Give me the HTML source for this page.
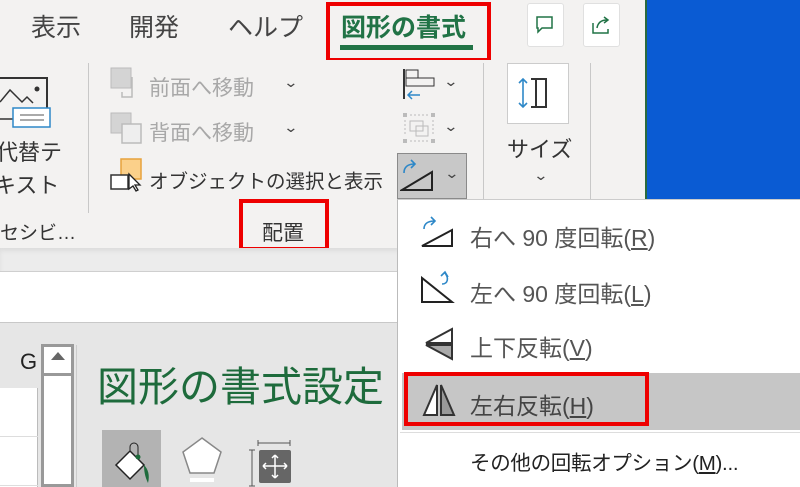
<!DOCTYPE html>
<html><head><meta charset="utf-8"><style>
*{margin:0;padding:0;box-sizing:border-box}
body{width:800px;height:487px;overflow:hidden;position:relative;background:#f3f2f1;font-family:"Liberation Sans","Noto Sans CJK JP",sans-serif;color:#333}
.a{position:absolute;white-space:nowrap}
.tab{font-size:25px;top:8px;color:#444}
.dis{color:#a8a8a8}
.mi{font-size:23px;color:#555;left:470px}
.ch{font-size:14px;color:#444;transform:scaleX(1.3)}
u{text-decoration:underline}
</style></head><body>
<div class="a" style="left:647px;top:0;width:153px;height:200px;background:#0a5bd3"></div>
<div class="a" style="left:645px;top:0;width:2px;height:200px;background:#2a6b3e"></div>
<div class="a tab" style="left:31px">表示</div>
<div class="a tab" style="left:129px">開発</div>
<div class="a tab" style="left:228px">ヘルプ</div>
<div class="a tab" style="left:341px;color:#217346;font-weight:bold">図形の書式</div>
<div class="a" style="left:340px;top:45px;width:133px;height:5px;background:#217346"></div>
<div class="a" style="left:326px;top:2px;width:165px;height:60px;border:4px solid #e00"></div>
<div class="a" style="left:527px;top:3px;width:37px;height:44px;background:#fff;border:1px solid #e0e0e0;border-radius:3px"></div>
<svg class="a" style="left:535px;top:15px" width="20" height="20"><path d="M2 2h15v11h-10l-4 4v-4h-1z" fill="none" stroke="#217346" stroke-width="1.5"/></svg>
<div class="a" style="left:583px;top:3px;width:37px;height:44px;background:#fff;border:1px solid #e0e0e0;border-radius:3px"></div>
<svg class="a" style="left:590px;top:13px" width="24" height="24"><path d="M3 10v10h15v-4M7 15c1-6 5-8 10-8M14 4l4 3-4 3" fill="none" stroke="#217346" stroke-width="1.5"/></svg>
<div class="a" style="left:0;top:60px;width:645px;height:188px;background:#f3f2f1"></div>
<div class="a" style="left:88px;top:63px;width:1px;height:150px;background:#c8c8c8"></div>
<div class="a" style="left:483px;top:63px;width:1px;height:170px;background:#c8c8c8"></div>
<div class="a" style="left:590px;top:63px;width:1px;height:170px;background:#c8c8c8"></div>
<svg class="a" style="left:0;top:75px" width="55" height="55"><path d="M0 3h47v31" fill="none" stroke="#333" stroke-width="2"/><path d="M0 27l10-12 12 12 5-5 6 6" fill="none" stroke="#333" stroke-width="1.5"/><circle cx="37" cy="14" r="2.5" fill="#333"/><path d="M0 44h13" stroke="#333" stroke-width="1.5"/><rect x="13" y="33" width="37" height="19" fill="#fff" stroke="#2e88c8" stroke-width="1.5"/><path d="M20 40h24M20 45h24" stroke="#555"/></svg>
<div class="a" style="left:-4px;top:135px;font-size:22px">代替テ</div>
<div class="a" style="left:-6px;top:168px;font-size:22px">キスト</div>
<div class="a" style="left:0;top:218px;font-size:19px">セシビ…</div>
<svg class="a" style="left:110px;top:67px" width="36" height="34"><rect x="1" y="1" width="20" height="20" fill="#d4d4d4" stroke="#bbb"/><path d="M22 10v20h-10v-5" fill="none" stroke="#bbb" stroke-width="1.5"/></svg>
<div class="a dis" style="left:149px;top:72px;font-size:21px">前面へ移動</div>
<div class="a ch dis" style="left:285px;top:74px">⌄</div>
<svg class="a" style="left:110px;top:112px" width="36" height="34"><rect x="1" y="1" width="20" height="20" fill="#d4d4d4" stroke="#bbb"/><rect x="12" y="12" width="19" height="19" fill="#eee" stroke="#bbb" stroke-width="1.5"/></svg>
<div class="a dis" style="left:149px;top:117px;font-size:21px">背面へ移動</div>
<div class="a ch dis" style="left:285px;top:119px">⌄</div>
<svg class="a" style="left:110px;top:158px" width="36" height="36"><rect x="11" y="1" width="20" height="20" fill="#fbd08a" stroke="#e8a23c" stroke-width="1.5"/><rect x="1" y="17" width="17" height="14" fill="#fff" stroke="#333" stroke-width="1.5"/><path d="M19 16l11 11h-5l3 5-2 1-3-5-4 3z" fill="#fff" stroke="#222" stroke-width="1.3"/></svg>
<div class="a" style="left:149px;top:165px;font-size:19.5px;color:#333">オブジェクトの選択と表示</div>
<div class="a" style="left:262px;top:217px;font-size:21px">配置</div>
<div class="a" style="left:239px;top:199px;width:90px;height:52px;border:4px solid #e00"></div>
<svg class="a" style="left:402px;top:68px" width="36" height="34"><path d="M2 1v30" stroke="#333" stroke-width="2"/><rect x="4" y="2" width="12" height="8" fill="none" stroke="#333"/><rect x="4" y="10" width="28" height="8" fill="none" stroke="#333"/><path d="M18 27h-12M10 23l-4 4 4 4" fill="none" stroke="#2e88c8" stroke-width="1.5"/></svg>
<div class="a ch" style="left:445px;top:73px">⌄</div>
<svg class="a" style="left:402px;top:112px" width="36" height="34"><g fill="#bbb"><rect x="1" y="1" width="4" height="4"/><rect x="29" y="1" width="4" height="4"/><rect x="1" y="27" width="4" height="4"/><rect x="29" y="27" width="4" height="4"/></g><path d="M3 8v16M31 8v16M8 3h18M8 29h18" stroke="#bbb" stroke-dasharray="2 2"/><rect x="8" y="9" width="13" height="10" fill="none" stroke="#bbb"/><rect x="14" y="14" width="12" height="10" fill="none" stroke="#bbb"/></svg>
<div class="a ch dis" style="left:445px;top:118px">⌄</div>
<div class="a" style="left:397px;top:153px;width:70px;height:46px;background:#c8c8c8;border:1px solid #8a8a8a"></div>
<svg class="a" style="left:400px;top:158px" width="36" height="36"><path d="M4 15c0-7 5-9 11-9M11 2l4 4-4 4" fill="none" stroke="#2e88c8" stroke-width="1.6"/><path d="M2 32l30-18v18z" fill="none" stroke="#222" stroke-width="2"/></svg>
<div class="a ch" style="left:446px;top:165px">⌄</div>
<div class="a" style="left:507px;top:63px;width:62px;height:61px;background:#fff;border:1px solid #ccc"></div>
<svg class="a" style="left:517px;top:75px" width="42" height="38"><path d="M6 4v28M2 8l4-4 4 4M2 28l4 4 4-4" fill="none" stroke="#2e88c8" stroke-width="1.6"/><path d="M14 4h4M14 32h4" stroke="#333" stroke-width="2"/><rect x="19" y="4" width="10" height="28" fill="none" stroke="#333" stroke-width="2"/></svg>
<div class="a" style="left:507px;top:132px;font-size:22px">サイズ</div>
<div class="a ch" style="left:535px;top:167px">⌄</div>
<div class="a" style="left:0;top:248px;width:400px;height:23px;background:#ececec;box-shadow:inset 0 3px 4px #ddd"></div>
<div class="a" style="left:0;top:271px;width:400px;height:1px;background:#cfcfcf"></div>
<div class="a" style="left:0;top:272px;width:400px;height:50px;background:#fff"></div>
<div class="a" style="left:0;top:322px;width:400px;height:1px;background:#c8c8c8"></div>
<div class="a" style="left:0;top:323px;width:400px;height:164px;background:#e6e6e6"></div>
<div class="a" style="left:20px;top:349px;font-size:22px;color:#222">G</div>
<div class="a" style="left:0;top:388px;width:38px;height:99px;background:#fff;border-right:1px solid #bbb"></div>
<div class="a" style="left:0;top:436px;width:38px;height:1px;background:#ddd"></div>
<div class="a" style="left:0;top:485px;width:38px;height:1px;background:#ddd"></div>
<div class="a" style="left:41px;top:344px;width:33px;height:143px;background:#fff;border:3px solid #999"></div>
<div class="a" style="left:44px;top:373px;width:27px;height:3px;background:#999"></div>
<div class="a" style="left:51px;top:352px;width:0;height:0;border-left:7px solid transparent;border-right:7px solid transparent;border-bottom:8px solid #666"></div>
<div class="a" style="left:76px;top:345px;width:1px;height:142px;background:#ccc"></div>
<div class="a" style="left:97px;top:353px;font-size:41px;color:#1e6b3c">図形の書式設定</div>
<div class="a" style="left:102px;top:430px;width:59px;height:57px;background:#b3b3b3"></div>
<svg class="a" style="left:112px;top:437px" width="42" height="50"><path d="M4 28l14-14 14 14-14 14z" fill="#fff" stroke="#222" stroke-width="1.5"/><path d="M18 14v-4a4 4 0 0 1 8 0v10" fill="none" stroke="#222"/><circle cx="26" cy="20" r="2.5" fill="#1e6b3c"/><path d="M32 28c4 4 6 10 4 18c-3-6-4-12-4-18z" fill="#1e6b3c"/></svg>
<svg class="a" style="left:180px;top:436px" width="44" height="51"><path d="M22 2l19 14-7 21h-24l-7-21z" fill="#fff" stroke="#888" stroke-width="1.5"/><path d="M10 44h24" stroke="#fff" stroke-width="4"/></svg>
<svg class="a" style="left:248px;top:438px" width="48" height="49"><path d="M10 2v6M10 5h32M42 2v6M4 12v36M1 12h6M1 48h6" stroke="#555"/><rect x="11" y="12" width="32" height="33" rx="2" fill="#666"/><path d="M27 17v23M15 28h24M27 17l-3 3M27 17l3 3M27 40l-3-3M27 40l3-3M15 28l3-3M15 28l3 3M39 28l-3-3M39 28l-3 3" stroke="#fff" stroke-width="1.5"/></svg>
<div class="a" style="left:397px;top:199px;width:403px;height:288px;background:#fff;border-left:1px solid #bbb;border-top:1px solid #ccc"></div>
<svg class="a" style="left:420px;top:216px" width="40" height="34"><path d="M4 13c0-6 5-8 11-8M11 1l4 4-4 4" fill="none" stroke="#2e88c8" stroke-width="1.6"/><path d="M2 30l30-16v16z" fill="none" stroke="#222" stroke-width="2"/></svg>
<div class="a mi" style="top:219px">右へ 90 度回転(<u>R</u>)</div>
<svg class="a" style="left:420px;top:270px" width="40" height="36"><path d="M2 8v24h30z" fill="none" stroke="#222" stroke-width="2"/><path d="M22 14c6 0 7-6 3-11M21 6l4-4 3 5" fill="none" stroke="#2e88c8" stroke-width="1.6"/></svg>
<div class="a mi" style="top:275px">左へ 90 度回転(<u>L</u>)</div>
<svg class="a" style="left:422px;top:327px" width="34" height="36"><path d="M30 2l-26 14h26z" fill="#fff" stroke="#333" stroke-width="2"/><path d="M30 32l-26-14h26z" fill="#aaa" stroke="#333" stroke-width="2"/></svg>
<div class="a mi" style="top:329px">上下反転(<u>V</u>)</div>
<div class="a" style="left:402px;top:373px;width:398px;height:57px;background:#c6c6c6"></div>
<div class="a" style="left:404px;top:372px;width:245px;height:54px;border:4px solid #e00"></div>
<svg class="a" style="left:422px;top:383px" width="34" height="34"><path d="M15 2l-13 30h13z" fill="#fff" stroke="#333" stroke-width="2"/><path d="M19 2l13 30h-13z" fill="#999" stroke="#333" stroke-width="2"/></svg>
<div class="a mi" style="top:387px;color:#444">左右反転(<u>H</u>)</div>
<div class="a" style="left:400px;top:432px;width:400px;height:1px;background:#ddd"></div>
<div class="a mi" style="top:446px;color:#222;font-size:20.5px;letter-spacing:-0.3px">その他の回転オプション(<u>M</u>)...</div>
</body></html>
